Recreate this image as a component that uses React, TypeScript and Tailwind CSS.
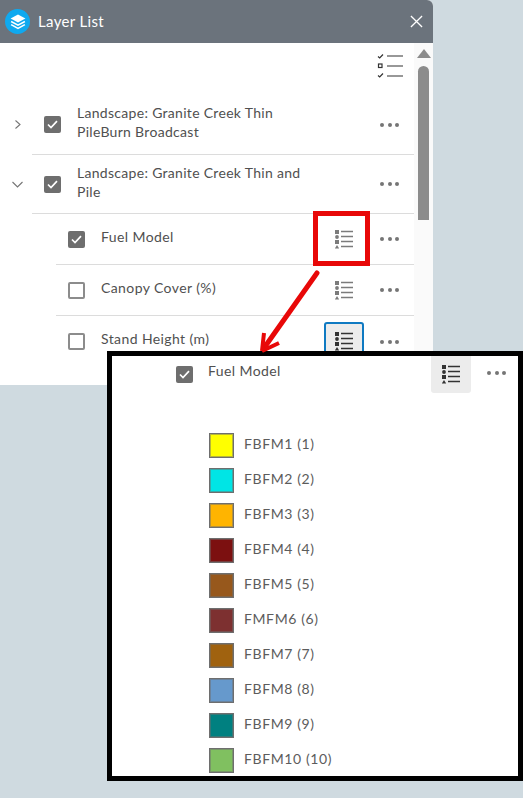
const font = { fontFamily: '"Lato", "Noto Sans", sans-serif' };

function Dots({ className = "" }: { className?: string }) {
  return (
    <div className={`flex w-[19px] justify-between ${className}`}>
      <span className="h-[4px] w-[4px] rounded-full bg-[#757575]" />
      <span className="h-[4px] w-[4px] rounded-full bg-[#757575]" />
      <span className="h-[4px] w-[4px] rounded-full bg-[#757575]" />
    </div>
  );
}

function Checkbox({ checked }: { checked: boolean }) {
  if (!checked) {
    return <div className="h-[17px] w-[17px] rounded-[2px] border-2 border-[#8c8c8c] bg-white" />;
  }
  return (
    <div className="flex h-[17px] w-[17px] items-center justify-center rounded-[2px] bg-[#6e6e6e]">
      <svg width="11" height="9" viewBox="0 0 11 9" fill="none">
        <path d="M1 4.5L4 7.5L10 1.2" stroke="white" strokeWidth="1.7" />
      </svg>
    </div>
  );
}

function LegendIcon({ color = "#7b7b7b" }: { color?: string }) {
  return (
    <svg width="18" height="19" viewBox="0 0 18 19" fill="none">
      <rect x="0" y="0" width="4" height="4" fill={color} />
      <circle cx="2" cy="7" r="1.9" fill={color} />
      <rect x="0" y="10" width="4" height="4" fill={color} />
      <path d="M2 15L4.2 18.5H-0.2Z" fill={color} />
      <path d="M6 1.5H18M6 6.5H18M6 11.5H18M6 16.5H18" stroke={color} strokeWidth="1.3" />
    </svg>
  );
}

function ListToggleIcon() {
  return (
    <svg width="26" height="25" viewBox="0 0 26 25" fill="none" stroke="#333">
      <path d="M1 3.5L2.7 5L6 1.5" strokeWidth="1.2" />
      <rect x="1.5" y="11" width="3.5" height="3.5" strokeWidth="1.2" />
      <path d="M1 22.5L2.7 24L6 20.5" strokeWidth="1.2" />
      <path d="M10 3H26M10 13H26M10 23H26" strokeWidth="1.1" />
    </svg>
  );
}

function Expander({ open }: { open: boolean }) {
  return (
    <svg width="13" height="13" viewBox="0 0 13 13" fill="none" stroke="#757575" strokeWidth="1.1">
      {open ? <path d="M1.5 4L6.5 9L11.5 4" /> : <path d="M4.5 2.5L9 6.5L4.5 10.5" />}
    </svg>
  );
}

const sublayers = [
  { name: "Fuel Model", checked: true },
  { name: "Canopy Cover (%)", checked: false },
  { name: "Stand Height (m)", checked: false },
];

const legend = [
  { label: "FBFM1 (1)", color: "#ffff00" },
  { label: "FBFM2 (2)", color: "#00e5e5" },
  { label: "FBFM3 (3)", color: "#ffb400" },
  { label: "FBFM4 (4)", color: "#7c1010" },
  { label: "FBFM5 (5)", color: "#97581c" },
  { label: "FMFM6 (6)", color: "#7d3030" },
  { label: "FBFM7 (7)", color: "#a0620f" },
  { label: "FBFM8 (8)", color: "#6699cc" },
  { label: "FBFM9 (9)", color: "#008080" },
  { label: "FBFM10 (10)", color: "#80c060" },
];

export default function App() {
  return (
    <div className="relative h-[798px] w-[523px] overflow-hidden bg-[#cfdae0] text-[14px] tracking-[0.4px] text-[#505050]" style={font}>
      {/* Widget panel */}
      <div className="h-[385px] w-[433px] overflow-hidden rounded-tr-[6px] bg-white">
        <div className="flex h-[43px] items-center bg-[#6b737c] pl-[5px] pr-[10px]">
          <div className="flex h-[25px] w-[25px] items-center justify-center rounded-full bg-[#0fa9ef]">
            <svg width="18" height="18" viewBox="0 0 17 17" fill="none">
              <path d="M8.5 1.5L15.5 5.3L8.5 9L1.5 5.3Z" fill="white" />
              <path d="M2 8L8.5 11.5L15 8M2 11L8.5 14.5L15 11" stroke="white" strokeWidth="1.5" />
            </svg>
          </div>
          <span className="ml-[8px] text-[15px] tracking-[0.35px] text-white">Layer List</span>
          <svg className="ml-auto" width="13" height="13" viewBox="0 0 14 14" stroke="white" strokeWidth="1.4">
            <path d="M1 1L13 13M13 1L1 13" />
          </svg>
        </div>

        <div className="flex h-[342px]">
          <div className="w-[414px] shrink-0">
            <div className="flex h-[52px] items-start justify-end pr-[11px] pt-[10px]">
              <ListToggleIcon />
            </div>

            <div className="ml-[32px] flex h-[60px] items-center border-b border-[#dcdcdc]">
              <div className="-ml-[21px] flex w-[33px] shrink-0 items-center">
                <Expander open={false} />
              </div>
              <div className="w-[33px] shrink-0"><Checkbox checked /></div>
              <p className="-mt-[5px] w-[210px] leading-[19px] tracking-[0.3px]">Landscape: Granite Creek Thin PileBurn Broadcast</p>
              <Dots className="ml-auto mr-[15px]" />
            </div>

            <div className="ml-[32px] flex h-[59px] items-center border-b border-[#dcdcdc]">
              <div className="-ml-[21px] flex w-[33px] shrink-0 items-center">
                <Expander open />
              </div>
              <div className="w-[33px] shrink-0"><Checkbox checked /></div>
              <p className="-mt-[4px] w-[240px] leading-[19px] tracking-[0.3px]">Landscape: Granite Creek Thin and Pile</p>
              <Dots className="ml-auto mr-[15px]" />
            </div>

            {sublayers.map((layer, i) => (
              <div
                key={layer.name}
                className={`ml-[56px] flex h-[51px] items-center ${i < 2 ? "border-b border-[#dcdcdc]" : ""}`}
              >
                <div className="ml-[12px] w-[33px] shrink-0"><Checkbox checked={layer.checked} /></div>
                <span className="-mt-[6px]">{layer.name}</span>
                {i === 2 ? (
                  <div className="ml-auto mr-[16px] flex h-[40px] w-[40px] items-center justify-center rounded-[3px] border-2 border-[#0f7ac2] bg-[#ececec]">
                    <LegendIcon color="#333333" />
                  </div>
                ) : (
                  <div className="ml-auto mr-[27px]"><LegendIcon /></div>
                )}
                <Dots className="mr-[15px]" />
              </div>
            ))}
          </div>

          {/* Scrollbar */}
          <div className="flex w-[19px] flex-col items-center bg-[#fafafa] pt-[6px]">
            <div className="h-0 w-0 border-x-[7px] border-b-[9px] border-x-transparent border-b-[#8c8c8c]" />
            <div className="mt-[8px] h-[154px] w-[11px] rounded-t-[6px] bg-[#8c8c8c]" />
          </div>
        </div>
      </div>

      {/* Red highlight around the legend button */}
      <div className="absolute left-[313px] top-[211px] h-[55px] w-[57px] border-[5px] border-[#e80808]" />

      {/* Arrow from the highlight to the inset */}
      <svg className="absolute left-[255px] top-[270px] z-20" width="70" height="85" viewBox="0 0 70 85" fill="none">
        <path d="M62 3L9 78" stroke="#e80808" strokeWidth="5" strokeLinecap="round" />
        <path d="M7 81L9 63M7 81L24 73" stroke="#e80808" strokeWidth="4" />
      </svg>

      {/* Inset showing the expanded legend */}
      <div className="absolute left-[107px] top-[351px] h-[430px] w-[416px] border-[5px] border-black bg-white">
        <div className="flex h-[37px] items-start">
          <div className="ml-[64px] mt-[10px] w-[32px] shrink-0"><Checkbox checked /></div>
          <span className="mt-[4px]">Fuel Model</span>
          <div className="ml-auto mr-[47px] flex h-[37px] w-[40px] items-center justify-center rounded-b-[3px] bg-[#ececec]">
            <LegendIcon color="#333333" />
          </div>
        </div>
        <div className="absolute left-[375px] top-[15px]"><Dots /></div>

        <ul className="ml-[97px] mt-[40px] flex flex-col gap-[10px]">
          {legend.map((item) => (
            <li key={item.label} className="flex h-[25px] items-center gap-[10px] tracking-[0.6px] text-[#5c5c5c]">
              <span
                className="h-[25px] w-[25px] border border-[#6e6e6e] shadow-[inset_0_0_0_1px_rgba(110,110,110,0.5)]"
                style={{ backgroundColor: item.color }}
              />
              <span className="-mt-[5px]">{item.label}</span>
            </li>
          ))}
        </ul>
      </div>
    </div>
  );
}
